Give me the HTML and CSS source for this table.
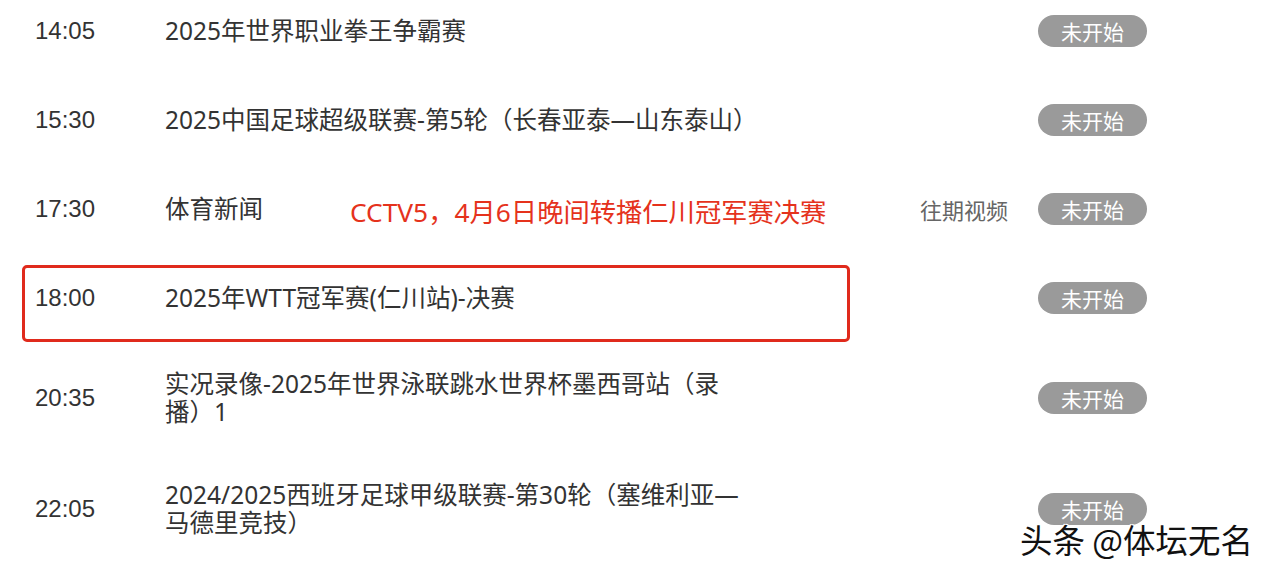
FILE: index.html
```html
<!DOCTYPE html>
<html lang="zh-CN">
<head>
    <meta charset="UTF-8">
    <meta name="viewport" content="width=device-width, initial-scale=1.0">
    <title>CCTV5 节目单</title>
    <link rel="stylesheet" href="styles.css">
</head>
<body>

<div class="schedule">
    <div class="row">
        <span class="time">14:05</span>
        <span class="title">2025年世界职业拳王争霸赛</span>
        <span class="replay"></span>
        <span class="status">未开始</span>
    </div>
    <div class="row">
        <span class="time">15:30</span>
        <span class="title">2025中国足球超级联赛-第5轮（长春亚泰—山东泰山）</span>
        <span class="replay"></span>
        <span class="status">未开始</span>
    </div>
    <div class="row">
        <span class="time">17:30</span>
        <span class="title">体育新闻</span>
        <span class="replay">往期视频</span>
        <span class="status">未开始</span>
    </div>
    <div class="row">
        <span class="time">18:00</span>
        <span class="title">2025年WTT冠军赛(仁川站)-决赛</span>
        <span class="replay"></span>
        <span class="status">未开始</span>
    </div>
    <div class="row">
        <span class="time">20:35</span>
        <span class="title">实况录像-2025年世界泳联跳水世界杯墨西哥站（录播）1</span>
        <span class="replay"></span>
        <span class="status">未开始</span>
    </div>
    <div class="row">
        <span class="time">22:05</span>
        <span class="title">2024/2025西班牙足球甲级联赛-第30轮（塞维利亚—马德里竞技）</span>
        <span class="replay"></span>
        <span class="status">未开始</span>
    </div>

    <!-- annotations drawn over the list -->
    <div class="note">CCTV5，4月6日晚间转播仁川冠军赛决赛</div>
    <div class="highlight"></div>
</div>

<div class="watermark">头条 @体坛无名</div>

</body>
</html>
```

FILE: styles.css
```css
body {
    margin: 0;
    background-color: #fff;
    color: #333;
    font-family: "Noto Sans", "Noto Sans CJK SC", sans-serif;
    overflow: hidden;
}
.schedule {
    position: relative;
    margin-top: -14px;
}
.row {
    display: flex;
    align-items: center;
    box-sizing: border-box;
    min-height: 89px;
    padding: 27.5px 0 27.5px 35px;
}
.time {
    width: 130px;
    flex-shrink: 0;
    font-family: "Liberation Sans", "Noto Sans CJK SC", sans-serif;
    font-size: 24px;
    color: #333;
}
.title {
    width: 584px;
    margin-right: 6px;
    flex-shrink: 0;
    font-size: 24.5px;
    line-height: 28px;
    color: #333;
}
.replay {
    width: 253px;
    flex-shrink: 0;
    text-align: right;
    font-family: "Noto Sans CJK SC", sans-serif;
    font-size: 22px;
    color: #666;
}
.status {
    margin-left: 30px;
    width: 109px;
    height: 32px;
    line-height: 32px;
    border-radius: 16px;
    background-color: #9a9a9a;
    color: #fff;
    text-align: center;
    font-family: "Noto Sans CJK SC", sans-serif;
    font-size: 21px;
}
.note {
    position: absolute;
    left: 350px;
    top: 208px;
    font-size: 26.3px;
    line-height: 36px;
    color: #e5321c;
    white-space: nowrap;
}
.highlight {
    position: absolute;
    left: 22px;
    top: 279px;
    width: 822px;
    height: 71px;
    border: 3px solid #e02a1c;
    border-radius: 5px;
}
.watermark {
    position: absolute;
    left: 1020px;
    top: 517px;
    font-family: "Noto Sans CJK SC", sans-serif;
    font-size: 32.5px;
    line-height: 44px;
    color: #111;
    text-shadow: 1px 1px 0 #fff, -1px -1px 0 #fff, 1px -1px 0 #fff, -1px 1px 0 #fff;
    white-space: nowrap;
}
```
